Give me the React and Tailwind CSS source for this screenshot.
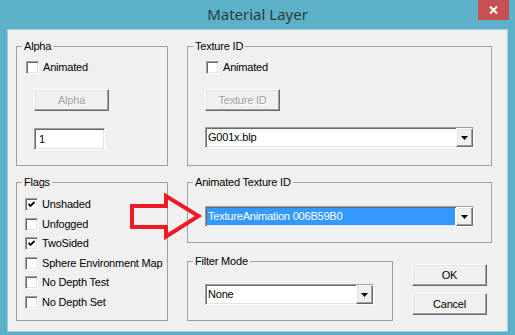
import React from 'react';

const raised =
  'bg-[#f0f0f0] border border-t-white border-l-white border-b-[#696969] border-r-[#696969] shadow-[inset_-1px_-1px_0_#a0a0a0,inset_1px_1px_0_#e3e3e3]';
const sunken =
  'bg-white border border-t-[#a0a0a0] border-l-[#a0a0a0] border-b-white border-r-white shadow-[inset_1px_1px_0_#696969,inset_-1px_-1px_0_#e3e3e3]';

function Check({ checked, label }) {
  return (
    <div className="flex items-center h-[13px] gap-[4px]">
      <span className={`w-[13px] h-[13px] shrink-0 flex items-center justify-center ${sunken}`}>
        {checked && (
          <svg width="7" height="7" viewBox="0 0 7 7">
            <path d="M0.5 3 L2.5 5 L6.5 1" fill="none" stroke="#000" strokeWidth="1.8" />
          </svg>
        )}
      </span>
      <span className="leading-[13px] whitespace-nowrap">{label}</span>
    </div>
  );
}

function Button({ children, disabled, className = '' }) {
  return (
    <div
      className={`h-[22px] w-[75px] flex items-center justify-center ${raised} ${
        disabled ? 'text-[#a0a0a0] [text-shadow:1px_1px_0_#fff]' : 'text-black'
      } ${className}`}
    >
      {children}
    </div>
  );
}

function Combo({ value, selected, className = '' }) {
  return (
    <div className={`h-[21px] flex items-stretch ${sunken} ${className}`}>
      <div className="flex-1 flex items-center p-[1px] min-w-0">
        <span
          className={`h-full flex-1 flex items-center pl-[1px] ${
            selected ? 'bg-[#3399ff] text-white' : 'text-black'
          }`}
        >
          {value}
        </span>
      </div>
      <div className={`w-[17px] flex items-center justify-center ${raised}`}>
        <svg width="7" height="4" viewBox="0 0 7 4">
          <path d="M0 0 H7 L3.5 4 Z" fill="#000" />
        </svg>
      </div>
    </div>
  );
}

function Group({ title, className = '', children }) {
  return (
    <fieldset className={`border border-[#a0a0a0] ${className}`}>
      <legend className="ml-[5px] px-[2px] leading-[13px]">{title}</legend>
      {children}
    </fieldset>
  );
}

export default function App() {
  return (
    <div className="w-[515px] h-[335px] bg-[#5cb1c8] flex flex-col overflow-hidden text-[11px] tracking-[-0.2px] text-black font-['Liberation_Sans',Arial,sans-serif]">
      <div className="relative h-[29px] flex items-center justify-center">
        <span className="text-[15px] tracking-normal text-[#2e3a40] font-['Noto_Sans',sans-serif] pb-[1px]">Material Layer</span>
        <div className="absolute right-[6px] top-0 w-[31px] h-[20px] bg-[#c75050] flex items-center justify-center">
          <svg width="9" height="8" viewBox="0 0 9 8">
            <path d="M1 0.5 L8 7.5 M8 0.5 L1 7.5" stroke="#fff" strokeWidth="2" />
          </svg>
        </div>
      </div>

      <div className="relative mx-[7px] h-[303px] bg-[#f0f0f0] border border-[#9fd0de] pl-[8px] pt-[10px]">
        <div className="flex gap-[19px]">
          <Group title="Alpha" className="w-[152px] h-[126px]">
            <div className="ml-[9px] mt-[8px]">
              <Check label="Animated" />
            </div>
            <Button disabled className="ml-[17px] mt-[15px]">Alpha</Button>
            <div className={`ml-[17px] mt-[17px] w-[71px] h-[22px] flex items-center pl-[4px] ${sunken}`}>1</div>
          </Group>

          <Group title="Texture ID" className="w-[305px] h-[126px]">
            <div className="ml-[18px] mt-[8px]">
              <Check label="Animated" />
            </div>
            <Button disabled className="ml-[17px] mt-[15px]">Texture ID</Button>
            <Combo value="G001x.blp" className="ml-[17px] mt-[16px] w-[269px]" />
          </Group>
        </div>

        <div className="flex gap-[19px] mt-[10px]">
          <Group title="Flags" className="w-[152px] h-[145px]">
            <div className="ml-[8px] mt-[9px] flex flex-col gap-[6.5px]">
              <Check checked label="Unshaded" />
              <Check label="Unfogged" />
              <Check checked label="TwoSided" />
              <Check label="Sphere Environment Map" />
              <Check label="No Depth Test" />
              <Check label="No Depth Set" />
            </div>
          </Group>

          <div className="w-[305px] flex flex-col">
            <Group title="Animated Texture ID" className="h-[67px]">
              <Combo selected value="TextureAnimation 006B59B0" className="ml-[17px] mt-[17px] w-[269px]" />
            </Group>
            <div className="flex mt-[12px]">
              <Group title="Filter Mode" className="w-[206px] h-[66px]">
                <Combo value="None" className="ml-[17px] mt-[16px] w-[169px]" />
              </Group>
              <div className="ml-[19px] pt-[9px] flex flex-col gap-[7px]">
                <Button>OK</Button>
                <Button>Cancel</Button>
              </div>
            </div>
          </div>
        </div>

        <svg
          className="absolute left-[113px] top-[156px]"
          width="100"
          height="60"
          viewBox="120 185 100 60"
        >
          <path
            d="M131 205 H165 V195 L197.5 215 L165 235.5 V226 H131 Z"
            fill="none"
            stroke="#ed1c24"
            strokeWidth="4"
            strokeLinejoin="miter"
          />
        </svg>
      </div>
    </div>
  );
}
